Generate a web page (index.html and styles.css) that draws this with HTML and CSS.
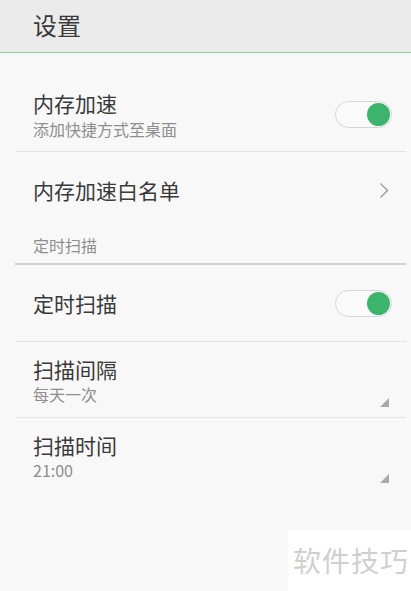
FILE: index.html
```html
<!DOCTYPE html>
<html lang="zh-CN">
<head>
    <meta charset="UTF-8">
    <meta name="viewport" content="width=device-width, initial-scale=1.0">
    <title>设置</title>
    <link rel="stylesheet" href="styles.css">
</head>
<body>
    <div class="header">设置</div>

    <div class="list">
        <!-- 内存加速 -->
        <div class="row row-first">
            <div class="text">
                <div class="title">内存加速</div>
                <div class="sub">添加快捷方式至桌面</div>
            </div>
            <div class="switch on"><span class="knob"></span></div>
        </div>
        <div class="line"></div>

        <div class="row row-single">
            <div class="title">内存加速白名单</div>
            <svg class="arrow" width="10" height="17" viewBox="0 0 10 17">
                <path d="M1.5 1.5 L8.5 8.5 L1.5 15.5" fill="none" stroke="#9a9a9a" stroke-width="1.4"/>
            </svg>
        </div>

        <!-- 定时扫描 -->
        <div class="section">定时扫描</div>
        <div class="section-line"></div>

        <div class="row row-single">
            <div class="title">定时扫描</div>
            <div class="switch on"><span class="knob"></span></div>
        </div>
        <div class="line"></div>

        <div class="row row-pick">
            <div class="text">
                <div class="title">扫描间隔</div>
                <div class="sub">每天一次</div>
            </div>
            <span class="corner"></span>
        </div>
        <div class="line"></div>

        <div class="row row-pick">
            <div class="text">
                <div class="title">扫描时间</div>
                <div class="sub">21:00</div>
            </div>
            <span class="corner"></span>
        </div>
    </div>

    <div class="watermark">软件技巧</div>
</body>
</html>
```

FILE: styles.css
```css
/* 基本样式 */
body {
    margin: 0;
    padding: 0;
    height: 591px;
    overflow: hidden;
    background-color: #f8f8f8;
    font-family: "Noto Sans CJK SC", "Noto Sans", Roboto, sans-serif;
    color: #333;
    position: relative;
}
.header {
    height: 52px;
    line-height: 50px;
    padding-left: 33px;
    font-size: 24px;
    color: #3a3a3a;
    background-color: #ebebeb;
    border-bottom: 1px solid #8fcc9d;
}
/* 列表 */
.row {
    display: flex;
    align-items: center;
    justify-content: space-between;
    padding: 0 19px 0 33px;
}
.row-first {
    padding-top: 37px;
    padding-bottom: 12px;
}
.row-single {
    height: 76px;
}
.row-pick {
    align-items: flex-end;
    padding-top: 14px;
    padding-bottom: 10px;
    padding-right: 22px;
}
.title {
    font-size: 21px;
    line-height: 26px;
    color: #3a3a3a;
}
.sub {
    font-size: 16px;
    line-height: 20px;
    margin-top: 3px;
    color: #8e8e8e;
}
.row-pick .sub {
    margin-top: 2px;
    margin-bottom: 3px;
}
.line {
    height: 1px;
    margin: 0 5px 0 16px;
    background-color: #e4e4e4;
}
.section {
    font-size: 16px;
    line-height: 20px;
    padding: 7px 0 8px 33px;
    color: #8e8e8e;
}
.section-line {
    height: 2px;
    margin: 0 5px 0 15px;
    background-color: #d2d2d2;
}
/* 开关 */
.switch {
    width: 54px;
    height: 25px;
    border: 1px solid #d5d5d5;
    border-radius: 14px;
    background-color: #fafafa;
    display: flex;
    align-items: center;
    justify-content: flex-end;
    padding-right: 1px;
}
.knob {
    width: 23px;
    height: 23px;
    border-radius: 50%;
    background-color: #3db46d;
}
.arrow {
    margin-right: 3px;
}
.corner {
    width: 0;
    height: 0;
    border-left: 9px solid transparent;
    border-bottom: 9px solid #a8a8a8;
}
/* 水印 */
.watermark {
    position: absolute;
    left: 288px;
    top: 530px;
    right: 0;
    bottom: 0;
    background-color: #ffffff;
    font-size: 28px;
    line-height: 61px;
    padding-left: 5px;
    color: #cfcfcf;
    letter-spacing: 1px;
}
```
